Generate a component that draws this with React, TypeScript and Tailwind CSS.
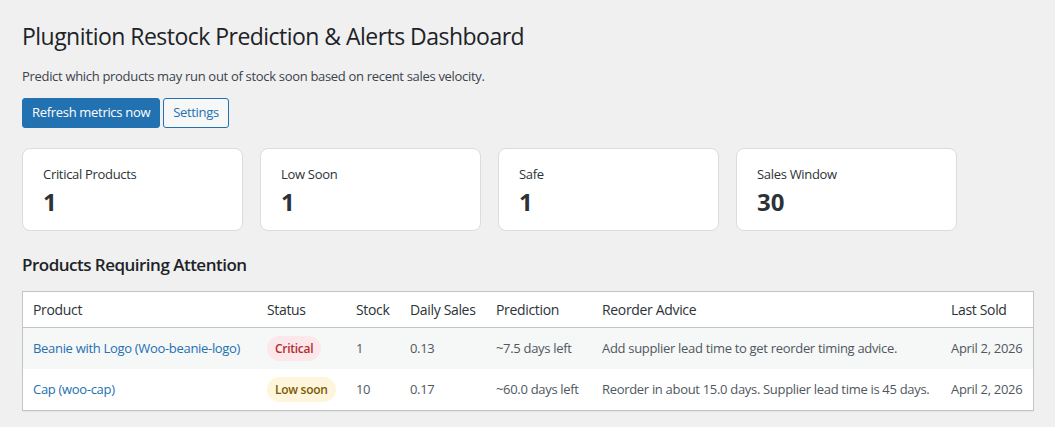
import React from "react";

type Stat = { label: string; value: string };

const stats: Stat[] = [
  { label: "Critical Products", value: "1" },
  { label: "Low Soon", value: "1" },
  { label: "Safe", value: "1" },
  { label: "Sales Window", value: "30" },
];

type Row = {
  product: string;
  status: "critical" | "low";
  stock: string;
  daily: string;
  prediction: string;
  advice: string;
  lastSold: string;
};

const rows: Row[] = [
  {
    product: "Beanie with Logo (Woo-beanie-logo)",
    status: "critical",
    stock: "1",
    daily: "0.13",
    prediction: "~7.5 days left",
    advice: "Add supplier lead time to get reorder timing advice.",
    lastSold: "April 2, 2026",
  },
  {
    product: "Cap (woo-cap)",
    status: "low",
    stock: "10",
    daily: "0.17",
    prediction: "~60.0 days left",
    advice: "Reorder in about 15.0 days. Supplier lead time is 45 days.",
    lastSold: "April 2, 2026",
  },
];

const StatusBadge = ({ status }: { status: Row["status"] }) =>
  status === "critical" ? (
    <span className="inline-block whitespace-nowrap rounded-full bg-[#fce8ea] px-[8px] py-[4px] text-[12px] leading-[17px] font-semibold tracking-[-0.024em] text-[#b32d2e]">
      Critical
    </span>
  ) : (
    <span className="inline-block whitespace-nowrap rounded-full bg-[#fdf6dd] px-[8px] py-[4px] text-[12px] leading-[17px] font-semibold tracking-[-0.024em] text-[#7d5a00]">
      Low soon
    </span>
  );

const headers = ["Product", "Status", "Stock", "Daily Sales", "Prediction", "Reorder Advice", "Last Sold"];

export default function App() {
  return (
    <div
      className="min-h-[427px] bg-[#f0f0f1] pl-[22px] pr-[21px] pt-[21px] pb-4 text-[13px] text-[#3c434a]"
      style={{ fontFamily: '"Open Sans", "Noto Sans", sans-serif' }}
    >
      <h1 className="text-[23px] leading-[30px] font-normal tracking-[-0.023em] text-[#1d2327]">
        Plugnition Restock Prediction &amp; Alerts Dashboard
      </h1>
      <p className="mt-[15px] leading-[20px] tracking-[-0.024em]">
        Predict which products may run out of stock soon based on recent sales velocity.
      </p>

      <div className="mt-[12px] flex gap-[3px]">
        <button className="h-[30px] rounded-[3px] border border-[#2271b1] bg-[#2271b1] px-[9px] text-[13px] tracking-[-0.024em] text-white">
          Refresh metrics now
        </button>
        <button className="h-[30px] rounded-[3px] border border-[#2271b1] bg-[#f6f7f7] px-[9px] text-[13px] tracking-[-0.024em] text-[#2271b1]">
          Settings
        </button>
      </div>

      <div className="mt-[20px] grid grid-cols-[repeat(4,221px)] gap-[17px]">
        {stats.map((s) => (
          <div
            key={s.label}
            className="rounded-lg border border-[#dcdcde] bg-white px-[20px] pt-[15px] pb-[13px]"
          >
            <div className="text-[13px] leading-[20px] font-medium tracking-[-0.024em] text-[#2c3338]">{s.label}</div>
            <div className="mt-[3px] text-[24px] leading-[30px] font-bold text-[#2c3338]">{s.value}</div>
          </div>
        ))}
      </div>

      <h2 className="mt-[22px] text-[17px] leading-[24px] font-semibold tracking-[-0.03em] text-[#1d2327]">
        Products Requiring Attention
      </h2>

      <table className="mt-[14px] w-full table-fixed border-separate border-spacing-0 border border-[#c3c4c7] bg-white tracking-[-0.024em] shadow-[0_1px_1px_rgba(0,0,0,0.04)]">
        <colgroup>
          <col className="w-[234px]" />
          <col className="w-[89px]" />
          <col className="w-[54px]" />
          <col className="w-[86px]" />
          <col className="w-[106px]" />
          <col className="w-[349px]" />
          <col />
        </colgroup>
        <thead>
          <tr>
            {headers.map((h) => (
              <th
                key={h}
                className="border-b border-[#c3c4c7] px-[10px] py-[8px] text-left text-[14px] leading-[19px] font-normal tracking-[-0.024em] text-[#2c3338] whitespace-nowrap"
              >
                {h}
              </th>
            ))}
          </tr>
        </thead>
        <tbody>
          {rows.map((r, i) => (
            <tr key={r.product} className={i % 2 === 0 ? "bg-[#f6f7f7]" : "bg-white"}>
              <td className="px-[10px] py-[8px] align-middle whitespace-nowrap">
                <a className="text-[#2271b1]">{r.product}</a>
              </td>
              <td className="px-[10px] py-[8px] align-middle">
                <StatusBadge status={r.status} />
              </td>
              <td className="px-[10px] py-[8px] align-middle text-[#50575e]">{r.stock}</td>
              <td className="px-[10px] py-[8px] align-middle text-[#50575e]">{r.daily}</td>
              <td className="px-[10px] py-[8px] align-middle text-[#50575e] whitespace-nowrap">{r.prediction}</td>
              <td className="px-[10px] py-[8px] align-middle text-[#50575e] whitespace-nowrap">{r.advice}</td>
              <td className="px-[10px] py-[8px] align-middle text-[#50575e] whitespace-nowrap">{r.lastSold}</td>
            </tr>
          ))}
        </tbody>
      </table>
    </div>
  );
}
